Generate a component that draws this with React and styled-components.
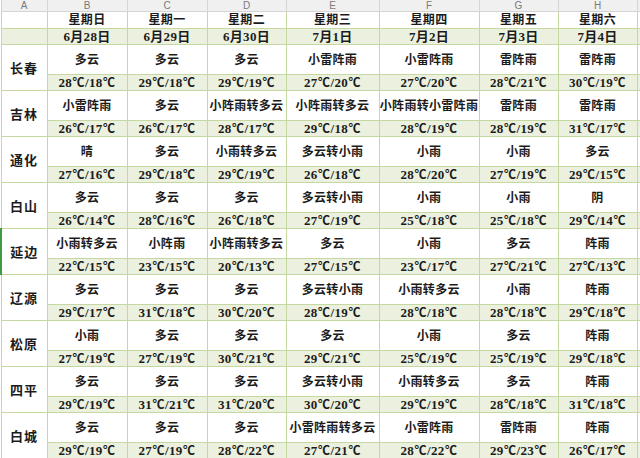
import React from 'react';
import styled, { createGlobalStyle } from 'styled-components';

const days = [
  ['星期日', '6月28日'],
  ['星期一', '6月29日'],
  ['星期二', '6月30日'],
  ['星期三', '7月1日'],
  ['星期四', '7月2日'],
  ['星期五', '7月3日'],
  ['星期六', '7月4日'],
];

const letters = ['A', 'B', 'C', 'D', 'E', 'F', 'G', 'H', ''];
const widths = [46, 80, 80, 79, 93, 100, 79, 79, 4];

const t = (hi, lo) => [hi, lo];

const cities = [
  ['长春', [['多云', t(28, 18)], ['多云', t(29, 18)], ['多云', t(29, 19)], ['小雷阵雨', t(27, 20)], ['小雷阵雨', t(27, 20)], ['雷阵雨', t(28, 21)], ['雷阵雨', t(30, 19)]]],
  ['吉林', [['小雷阵雨', t(26, 17)], ['多云', t(26, 17)], ['小阵雨转多云', t(28, 17)], ['小阵雨转多云', t(29, 18)], ['小阵雨转小雷阵雨', t(28, 19)], ['雷阵雨', t(28, 19)], ['雷阵雨', t(31, 17)]]],
  ['通化', [['晴', t(27, 16)], ['多云', t(29, 18)], ['小雨转多云', t(29, 19)], ['多云转小雨', t(26, 18)], ['小雨', t(28, 20)], ['小雨', t(27, 19)], ['多云', t(29, 15)]]],
  ['白山', [['多云', t(26, 14)], ['多云', t(28, 16)], ['多云', t(26, 18)], ['多云转小雨', t(27, 19)], ['小雨', t(25, 18)], ['小雨', t(25, 18)], ['阴', t(29, 14)]]],
  ['延边', [['小雨转多云', t(22, 15)], ['小阵雨', t(23, 15)], ['小阵雨转多云', t(20, 13)], ['多云', t(27, 15)], ['小雨', t(23, 17)], ['多云', t(27, 21)], ['阵雨', t(27, 13)]]],
  ['辽源', [['多云', t(29, 17)], ['多云', t(31, 18)], ['多云', t(30, 20)], ['多云转小雨', t(28, 19)], ['小雨转多云', t(28, 18)], ['小雨', t(28, 18)], ['阵雨', t(29, 18)]]],
  ['松原', [['小雨', t(27, 19)], ['多云', t(27, 19)], ['多云', t(30, 21)], ['多云', t(29, 21)], ['小雨', t(25, 19)], ['多云', t(25, 19)], ['阵雨', t(29, 18)]]],
  ['四平', [['多云', t(29, 19)], ['多云', t(31, 21)], ['多云', t(31, 20)], ['多云转小雨', t(30, 20)], ['小雨转多云', t(29, 19)], ['多云', t(28, 18)], ['阵雨', t(31, 18)]]],
  ['白城', [['多云', t(29, 19)], ['多云', t(27, 19)], ['多云', t(28, 22)], ['小雷阵雨转多云', t(27, 21)], ['小雷阵雨', t(28, 22)], ['雷阵雨', t(29, 23)], ['阵雨', t(26, 17)]]],
];

const GlobalStyle = createGlobalStyle`
  html, body {
    margin: 0;
    padding: 0;
    background: #ffffff;
    overflow: hidden;
  }
`;

const Temp = ({ value: [hi, lo] }) => (
  <>
    {hi}<Deg>℃</Deg>/{lo}<Deg>℃</Deg>
  </>
);

const App = () => (
  <>
    <GlobalStyle />
    <Sheet>
      <colgroup>
        {widths.map((w, i) => <col key={i} style={{ width: w }} />)}
      </colgroup>
      <tbody>
        <tr>
          {letters.map((l, i) => <ColHead key={i}>{l}</ColHead>)}
        </tr>
        <tr>
          <Cell $h={17} />
          {days.map(([d]) => <Cell key={d} $h={17}>{d}</Cell>)}
          <Cell $h={17} />
        </tr>
        <tr>
          <Cell $h={16} $green />
          {days.map(([d, date]) => <Cell key={d} $h={16} $green $num>{date}</Cell>)}
          <Cell $h={16} $green />
        </tr>
        {cities.map(([name, items], ci) => (
          <React.Fragment key={name}>
            <tr>
              <City rowSpan={2} $active={ci === 4}>{name}</City>
              {items.map(([w], i) => <Cell key={i} $h={30}>{w}</Cell>)}
              <Cell $h={30} />
            </tr>
            <tr>
              {items.map(([, temp], i) => (
                <Cell key={i} $h={16} $green $num><Temp value={temp} /></Cell>
              ))}
              <Cell $h={16} $green />
            </tr>
          </React.Fragment>
        ))}
      </tbody>
    </Sheet>
  </>
);

export default App;

const Sheet = styled.table`
  width: 640px;
  table-layout: fixed;
  border-collapse: collapse;
  font-family: "Liberation Serif", "Noto Sans CJK SC", serif;
  color: #1b1b1b;
`;

const ColHead = styled.td`
  height: 11px;
  padding: 0;
  background: #f0f0f0;
  border: 1px solid #d4d4d4;
  border-top: none;
  font-family: "Liberation Sans", Arial, sans-serif;
  font-size: 10px;
  line-height: 10px;
  color: #7a7a7a;
  text-align: center;
  vertical-align: middle;
`;

const Cell = styled.td`
  height: ${(p) => p.$h - 1}px;
  padding: 0;
  border: 1px solid #c6d8a2;
  background: ${(p) => (p.$green ? '#ebf1de' : '#ffffff')};
  font-size: ${(p) => (p.$num ? '13px' : '12px')};
  line-height: 12px;
  font-weight: 700;
  letter-spacing: 0.3px;
  text-align: center;
  vertical-align: middle;
  white-space: nowrap;
  overflow: hidden;
`;

const Deg = styled.span`
  display: inline-block;
  width: 13px;
  text-align: center;
  font-family: "Noto Sans CJK SC", sans-serif;
  font-feature-settings: "fwid";
  font-size: 12px;
  font-weight: 700;
  letter-spacing: 0;
`;

const City = styled.td`
  padding: 0;
  border: 1px solid #c6d8a2;
  border-left: ${(p) => (p.$active ? '2px solid #3f9b3f' : '1px solid #c6d8a2')};
  background: #ffffff;
  font-size: 13px;
  font-weight: 700;
  letter-spacing: 1px;
  text-align: center;
  vertical-align: middle;
`;
